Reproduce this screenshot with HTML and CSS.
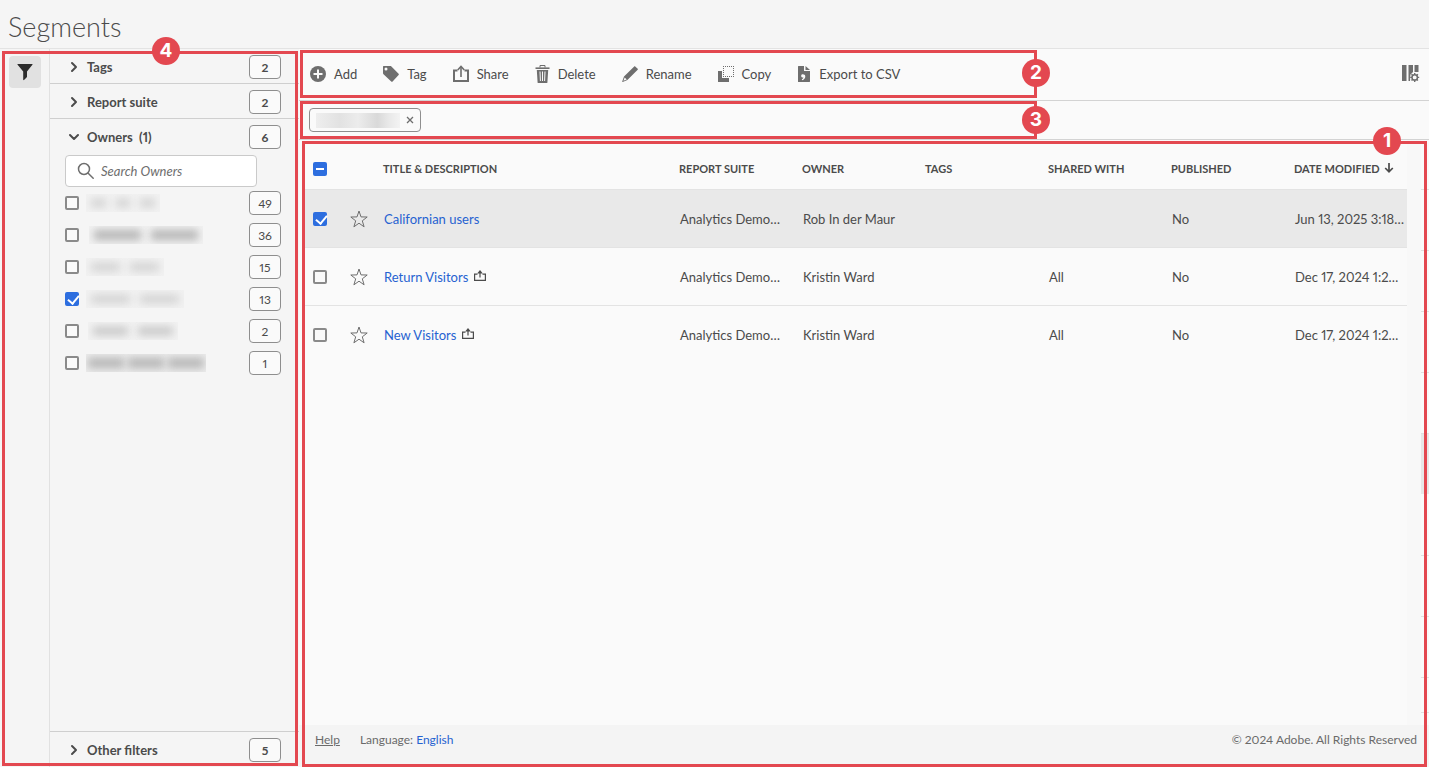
FILE: index.html
```
<!DOCTYPE html>
<html lang="en">
<head>
<meta charset="utf-8">
<title>Segments</title>
<link rel="stylesheet" href="styles.css">
</head>
<body>
<div class="app">
  <header class="page-header"><h1 class="page-title">Segments</h1></header>
  <div class="body">
    <aside class="sidebar">
      <div class="rail">
        <button class="filter-toggle" type="button" aria-label="Filters"><svg width="18" height="18" viewBox="0 0 18 18"><path d="M1.900 1h14.200c.5 0 .6.500.3.800L11 8.600v5.400l-3 3.100c-.3.300-.800.100-.800-.300V8.600L1.600 1.800C1.300 1.500 1.400 1 1.900 1z" fill="#2c2c2c"/></svg></button>
      </div>
      <div class="filters">
        <section class="group"><button class="group-head" type="button"><svg class="chev" width="10" height="12" viewBox="0 0 10 12"><path d="M3 2l4 4-4 4"/></svg><span>Tags</span></button><span class="count strong">2</span></section>
        <section class="group"><button class="group-head" type="button"><svg class="chev" width="10" height="12" viewBox="0 0 10 12"><path d="M3 2l4 4-4 4"/></svg><span>Report suite</span></button><span class="count strong">2</span></section>
        <section class="group open"><button class="group-head" type="button"><svg class="chev" width="10" height="12" viewBox="0 0 10 12"><path d="M1 4l4 4 4-4"/></svg><span>Owners &nbsp;(1)</span></button><span class="count strong">6</span></section>
        <div class="search"><svg width="18" height="18" viewBox="0 0 18 18"><circle cx="7" cy="7" r="5.500"/><path d="M11.200 11.200l5 5"/></svg><input type="text" placeholder="Search Owners" aria-label="Search Owners"></div>
        <ul class="owners">
          <li><input type="checkbox" class="box" aria-label="Owner 1"><span class="redacted w1"><i></i><i></i><i></i></span><span class="count">49</span></li>
          <li><input type="checkbox" class="box" aria-label="Owner 2"><span class="redacted w2"><i></i><i></i></span><span class="count">36</span></li>
          <li><input type="checkbox" class="box" aria-label="Owner 3"><span class="redacted w3"><i></i><i></i></span><span class="count">15</span></li>
          <li><input type="checkbox" class="box" aria-label="Owner 4" checked><span class="redacted w4"><i></i><i></i></span><span class="count">13</span></li>
          <li><input type="checkbox" class="box" aria-label="Owner 5"><span class="redacted w5"><i></i><i></i></span><span class="count">2</span></li>
          <li><input type="checkbox" class="box" aria-label="Owner 6"><span class="redacted w6"><i></i><i></i><i></i></span><span class="count">1</span></li>
        </ul>
        <section class="group last"><button class="group-head" type="button"><svg class="chev" width="10" height="12" viewBox="0 0 10 12"><path d="M3 2l4 4-4 4"/></svg><span>Other filters</span></button><span class="count strong">5</span></section>
      </div>
      <div class="callout callout-4"><b>4</b></div>
    </aside>
    <main class="main">
      <div class="toolbar">
        <button type="button"><svg width="16" height="16" viewBox="0 0 16 16"><circle cx="8" cy="8" r="8" fill="#6e6e6e"/><path d="M8 3.500v9M3.500 8h9" stroke="#fafafa" stroke-width="2"/></svg>Add</button>
        <button type="button"><svg width="16" height="16" viewBox="0 0 16 16"><path fill-rule="evenodd" d="M.6 0h6.800c.4 0 .7.100 1 .4l7.200 7.300c.4.400.4 1 0 1.400l-6 6.300c-.4.400-1 .4-1.400 0L.5 8.200C.2 7.900 0 7.500 0 7V.6C0 .3.300 0 .6 0zM3 1.500a1.500 1.500 0 100 3 1.500 1.500 0 000-3z" fill="#6e6e6e"/></svg>Tag</button>
        <button type="button"><svg width="16" height="18" viewBox="0 0 16 18" fill="none" stroke="#6e6e6e" stroke-width="2"><path d="M4.500 5.500H1v10.500h14V5.500h-3.500"/><path d="M8 12V2" stroke-width="1.600"/><path d="M4.700 5L8 1.500 11.300 5" stroke-width="1.600"/></svg>Share</button>
        <button type="button"><svg width="15" height="18" viewBox="0 0 15 18" fill="none" stroke="#6e6e6e"><path d="M5 2.500v-2h5v2" stroke-width="1"/><path d="M.5 3.200h14" stroke-width="1.600"/><path d="M1.800 5h11.400l-.8 12.400c0 .3-.3.600-.6.600H3.200c-.3 0-.6-.3-.6-.6z" fill="#6e6e6e" stroke="none"/><path d="M5 6.500l.4 9.500M7.500 6.500V16M10 6.500L9.600 16" stroke="#fafafa" stroke-width="1"/></svg>Delete</button>
        <button type="button"><svg width="16" height="16" viewBox="0 0 16 16"><path fill="#6e6e6e" fill-rule="evenodd" d="M12.200.4c.3-.3.700-.3 1 0l2.500 2.400c.3.300.3.700 0 1L5.400 14.100.7 15.900c-.3.100-.6-.2-.5-.5L2 10.600zM2.700 11.500l-1.300 3.300 3.300-1.200z"/></svg>Rename</button>
        <button type="button"><svg width="16" height="16" viewBox="0 0 16 16"><path fill="#6e6e6e" d="M0 5h4v7h7v4H.5a.5.5 0 01-.5-.5z"/><path d="M5 .5h11M5 10.500h11M5.500 0v11M15.500 0v11" fill="none" stroke="#6e6e6e" stroke-dasharray="1 1"/></svg>Copy</button>
        <button type="button"><svg width="14" height="16" viewBox="0 0 14 16"><path fill="#6e6e6e" d="M1.500 0H7v5h6v10.500c0 .3-.2.500-.5.500h-11a.5.5 0 01-.5-.5V.5c0-.3.200-.5.500-.5zM8.500 0L13 4H8.500z"/><path d="M6.800 8.500a1.700 1.700 0 10-.4 3c-.1.800-.7 1.400-1.600 1.800l.3.900c2-.6 3.200-2 3.200-4 0-.7-.6-1.700-1.500-1.700z" fill="#fafafa"/></svg>Export to CSV</button>
        <button type="button" class="columns" aria-label="Customize table columns"><svg width="18" height="18" viewBox="0 0 18 18"><path fill="#6e6e6e" d="M0 0h4.500v16H0zM6.500 0H11v7L8.500 9.500v2L8 16H6.500zM12.500 0h4v7h-4z"/><circle cx="12.700" cy="12.400" r="4.500" fill="#fafafa"/><circle cx="12.700" cy="12.400" r="2.700" fill="#fafafa" stroke="#6e6e6e" stroke-width="1.500"/><path d="M12.700 7.900v1.800m0 5.400v1.800M8.200 12.400H10m5.400 0h1.800M9.500 9.200l1.300 1.300m3.800 3.800l1.300 1.300m0-6.400l-1.300 1.300m-3.800 3.800l-1.300 1.300" stroke="#6e6e6e" stroke-width="1.400"/></svg></button>
        <div class="callout callout-2"><b>2</b></div>
      </div>
      <div class="chips">
        <div class="chip"><span class="chip-redacted"></span><button type="button" aria-label="Remove filter"><svg width="8" height="8" viewBox="0 0 8 8"><path d="M1 1l6 6M7 1L1 7" stroke="#6e6e6e" stroke-width="1.300"/></svg></button></div>
        <div class="callout callout-3"><b>3</b></div>
      </div>
      <div class="panel">
        <div class="content">
          <div class="table-area">
            <table class="segments">
              <colgroup><col class="c-check"><col class="c-star"><col><col class="c-data"><col class="c-data"><col class="c-data"><col class="c-data"><col class="c-data"><col class="c-date"></colgroup>
              <thead><tr><th><input type="checkbox" class="box mixed" aria-label="Select all"></th><th></th><th>TITLE &amp; DESCRIPTION</th><th>REPORT SUITE</th><th>OWNER</th><th>TAGS</th><th>SHARED WITH</th><th>PUBLISHED</th><th>DATE MODIFIED <svg class="sort" width="10" height="10" viewBox="0 0 10 10"><path d="M5 0v8M1.200 5L5 8.800 8.800 5" fill="none" stroke="#4b4b4b" stroke-width="1.700"/></svg></th></tr></thead>
              <tbody>
                <tr class="selected"><td><input type="checkbox" class="box" aria-label="Californian users" checked></td><td><svg class="star" width="18" height="18" viewBox="0 0 18 18"><path d="M9 1l2 5.900 6.200.1-4.900 3.800 1.800 6L9 13.200l-5.100 3.600 1.800-6L.8 7 7 6.900z"/></svg></td><td><a href="#">Californian users</a></td><td>Analytics Demo…</td><td>Rob In der Maur</td><td></td><td></td><td>No</td><td>Jun 13, 2025 3:18…</td></tr>
                <tr><td><input type="checkbox" class="box" aria-label="Return Visitors"></td><td><svg class="star" width="18" height="18" viewBox="0 0 18 18"><path d="M9 1l2 5.900 6.200.1-4.900 3.800 1.800 6L9 13.200l-5.100 3.600 1.800-6L.8 7 7 6.900z"/></svg></td><td><a href="#">Return Visitors</a><svg class="shared" width="12" height="12" viewBox="0 0 12 12"><path d="M3.500 4.100H.6v6.300h10.800V4.100H8.500M6 7.500V3" fill="none" stroke="#4b4b4b" stroke-width="1.200"/><path d="M6 0l2.800 3.500H3.200z" fill="#4b4b4b"/></svg></td><td>Analytics Demo…</td><td>Kristin Ward</td><td></td><td>All</td><td>No</td><td>Dec 17, 2024 1:2…</td></tr>
                <tr><td><input type="checkbox" class="box" aria-label="New Visitors"></td><td><svg class="star" width="18" height="18" viewBox="0 0 18 18"><path d="M9 1l2 5.900 6.200.1-4.900 3.800 1.800 6L9 13.200l-5.100 3.600 1.800-6L.8 7 7 6.900z"/></svg></td><td><a href="#">New Visitors</a><svg class="shared" width="12" height="12" viewBox="0 0 12 12"><path d="M3.500 4.100H.6v6.300h10.800V4.100H8.500M6 7.500V3" fill="none" stroke="#4b4b4b" stroke-width="1.200"/><path d="M6 0l2.800 3.500H3.200z" fill="#4b4b4b"/></svg></td><td>Analytics Demo…</td><td>Kristin Ward</td><td></td><td>All</td><td>No</td><td>Dec 17, 2024 1:2…</td></tr>
              </tbody>
            </table>
          </div>
          <div class="gutter"></div>
          <div class="ticks"><i></i><i></i><i></i><i></i><i class="thumb"></i><i class="blank"></i><i></i><i></i><i class="short"></i><i class="end"></i></div>
        </div>
        <footer class="footer"><a href="#" class="help">Help</a><span>Language: <a href="#">English</a></span><span class="copyright">© 2024 Adobe. All Rights Reserved</span></footer>
        <div class="callout callout-1"><b>1</b></div>
      </div>
    </main>
  </div>
</div>
</body>
</html>
```
FILE: styles.css
```
* { box-sizing: border-box; }
body { margin: 0; font-family: Lato, "Liberation Sans", sans-serif; font-size: 13px; line-height: 18px; font-variant-numeric: proportional-nums; color: #4b4b4b; background: #f5f5f5; }
button { font: inherit; color: inherit; background: none; border: 0; padding: 0; margin: 0; }
svg { display: block; flex: none; }
a { color: #2662d1; text-decoration: none; }
.app { min-height: 100vh; display: flex; flex-direction: column; }
.page-header { height: 49px; padding: 11px 8px 0; border-bottom: 1px solid #e3e3e3; }
.page-title { margin: 0; font-size: 27px; line-height: 32px; font-weight: 300; color: #4b4b4b; }
.body { flex: 1; display: flex; }

.sidebar { position: relative; display: flex; width: 299px; flex: none; background: #f5f5f5; }
.rail { width: 50px; padding: 7px 9px; border-right: 1px solid #e1e1e1; }
.filter-toggle { width: 32px; height: 32px; border-radius: 4px; background: #e1e1e1; display: flex; align-items: center; justify-content: center; }
.filters { flex: 1; display: flex; flex-direction: column; }
.group { display: flex; align-items: center; justify-content: space-between; height: 35px; padding: 2px 18px 0 19px; border-bottom: 1px solid #cfcfcf; }
.group.open { height: 36px; padding-top: 0; border-bottom: 0; }
.group.last { margin-top: auto; height: 36px; padding-top: 0; border-bottom: 0; border-top: 1px solid #cfcfcf; }
.group-head { display: flex; align-items: center; gap: 8px; font-weight: 700; }
.chev { fill: none; stroke: #4b4b4b; stroke-width: 2; stroke-linecap: round; stroke-linejoin: round; }
.count { display: block; width: 32px; height: 24px; border: 1px solid #8e8e8e; border-radius: 4px; background: #fafafa; text-align: center; font-size: 12px; line-height: 23px; flex: none; }
.count.strong { font-weight: 700; }
.search { display: flex; align-items: center; gap: 6px; width: 192px; height: 32px; margin-left: 15px; padding: 0 11px; background: #fff; border: 1px solid #cacaca; border-radius: 4px; }
.search svg { fill: none; stroke: #6e6e6e; stroke-width: 1.5; stroke-linecap: round; }
.search input { flex: 1; min-width: 0; border: 0; padding: 0; font: inherit; font-style: italic; background: none; outline: 0; }
.search input::placeholder { color: #6e6e6e; }
.owners { list-style: none; margin: 0; padding: 0 18px 0 15px; }
.owners li { display: flex; align-items: center; height: 32px; }
.owners .count { margin-left: auto; }
.box { appearance: none; flex: none; display: block; width: 14px; height: 14px; margin: 0; border: 2px solid #8a8a8a; border-radius: 2px; background: #fafafa; }
.box:checked, .box.mixed { border-color: #2d6edf; background: #2d6edf; }
.box:checked::after { content: ""; display: block; width: 5px; height: 9px; margin: -1px 3px; border: solid #fff; border-width: 0 2px 2px 0; transform: rotate(40deg); }
.box.mixed::after { content: ""; display: block; width: 8px; height: 2px; margin: 4px 1px; background: #fff; }

.redacted { display: flex; align-items: center; justify-content: space-around; height: 18px; margin-left: 7px; overflow: hidden; background: #f2f2f2; }
.redacted i { height: 8px; background: #c4c4c4; filter: blur(4px); flex: 1; margin: 0 5px; }
.w1 { width: 74px; } .w2 { width: 114px; margin-left: 10px; } .w3 { width: 78px; } .w4 { width: 98px; } .w5 { width: 90px; margin-left: 9px; } .w6 { width: 120px; background: #ececec; }
.w1 i, .w3 i, .w4 i { background: #d0d0d0; }
.w2 i, .w6 i { height: 10px; background: #b4b4b4; }
.w6 i { margin: 0 2px; }

.main { flex: 1; min-width: 0; display: flex; flex-direction: column; background: #fafafa; }
.toolbar { position: relative; display: flex; align-items: center; gap: 26px; height: 52px; padding: 0 9px 2px 11px; border-bottom: 1px solid #d3d3d3; }
.toolbar button { display: flex; align-items: center; gap: 8px; white-space: nowrap; }
.toolbar .columns { margin-left: auto; }
.chips { position: relative; display: flex; align-items: center; height: 39px; padding-left: 10px; border-bottom: 1px solid #d3d3d3; }
.chip { display: flex; align-items: center; gap: 6px; width: 112px; height: 24px; padding-left: 6px; border: 1px solid #8e8e8e; border-radius: 4px; }
.chip-redacted { width: 84px; height: 15px; background: linear-gradient(90deg, #eee, #e2e2e2 28%, #ececec 50%, #d9d9d9 73%, #e8e8e8 86%, #f3f3f3); }
.panel { position: relative; flex: 1; display: flex; flex-direction: column; }
.content { flex: 1; display: flex; padding-left: 6px; }
.table-area { flex: 1; min-width: 0; }
.gutter { width: 14px; background: #f8f8f8; }
.ticks { width: 8px; padding-top: 49px; }
.ticks i { display: block; height: 61px; border-top: 1px solid #e0e0e0; }
.ticks .thumb { background: #e8e8e8; }
.ticks .blank { border-top-color: transparent; }
.ticks .short { height: 35px; }
.ticks .end { height: 1px; }

.segments { width: 100%; table-layout: fixed; border-collapse: separate; border-spacing: 0; }
.c-check { width: 38px; } .c-star { width: 32px; } .c-data { width: 123px; } .c-date { width: 121px; }
.segments th { height: 50px; padding: 8px 0 0 8px; border-bottom: 1px solid #e3e3e3; text-align: left; font-size: 11px; line-height: 16px; white-space: nowrap; }
.segments td { height: 58px; padding: 0 0 0 9px; border-bottom: 1px solid #e3e3e3; white-space: nowrap; }
.segments td:first-child { padding-left: 8px; }
.segments td:nth-child(2) { padding-left: 7px; }
.segments tbody tr:last-child td { border-bottom: 0; }
.selected td { background: #e9e9e9; }
.star { fill: none; stroke: #6e6e6e; stroke-width: 1; }
.shared, .sort { display: inline-block; margin-left: 6px; }
.sort { margin-left: 2px; }
.footer { display: flex; align-items: center; gap: 20px; height: 42px; padding: 0 12px 12px 16px; background: #f4f4f4; color: #6a6a6a; font-size: 12px; }
.help { color: inherit; text-decoration: underline; }
.copyright { margin-left: auto; }

.callout { position: absolute; border: 3px solid #e34850; pointer-events: none; z-index: 2; }
.callout b { position: absolute; width: 28px; height: 28px; border-radius: 50%; background: #e34850; color: #fff; font: 700 19px/28px Inter, sans-serif; text-align: center; }
.callout-1 { inset: 1px 2px 0 3px; }
.callout-1 b { top: -17px; right: 23px; }
.callout-2 { left: 1px; top: 1px; width: 737px; height: 48px; }
.callout-2 b { top: 6px; right: -16px; }
.callout-3 { left: 1px; top: 0; width: 737px; height: 38px; }
.callout-3 b { top: 2px; right: -16px; }
.callout-4 { inset: 2px 1px 1px 2px; }
.callout-4 b { top: -17px; left: 147px; }
```
